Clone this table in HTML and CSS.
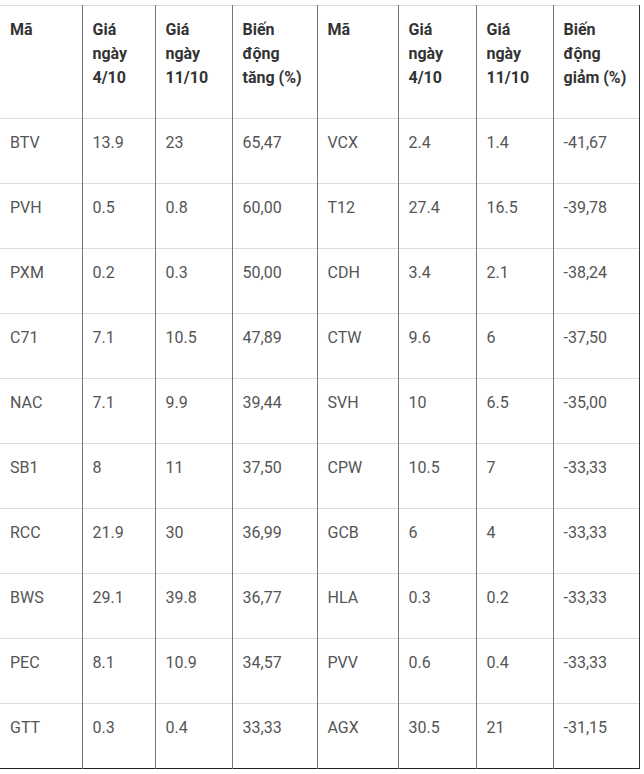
FILE: index.html
```html
<!DOCTYPE html>
<html>
<head>
<meta charset="utf-8">
<link rel="stylesheet" href="styles.css">
</head>
<body>
<table class="tbl">
<colgroup>
<col class="c1"><col class="c2"><col class="c3"><col class="c4"><col class="c5"><col class="c6"><col class="c7"><col class="c8">
</colgroup>
<thead>
<tr><th>Mã</th><th>Giá ngày 4/10</th><th>Giá ngày 11/10</th><th>Biến động tăng (%)</th><th>Mã</th><th>Giá ngày 4/10</th><th>Giá ngày 11/10</th><th>Biến động giảm (%)</th></tr>
</thead>
<tbody>
<tr><td>BTV</td><td>13.9</td><td>23</td><td>65,47</td><td>VCX</td><td>2.4</td><td>1.4</td><td>-41,67</td></tr>
<tr><td>PVH</td><td>0.5</td><td>0.8</td><td>60,00</td><td>T12</td><td>27.4</td><td>16.5</td><td>-39,78</td></tr>
<tr><td>PXM</td><td>0.2</td><td>0.3</td><td>50,00</td><td>CDH</td><td>3.4</td><td>2.1</td><td>-38,24</td></tr>
<tr><td>C71</td><td>7.1</td><td>10.5</td><td>47,89</td><td>CTW</td><td>9.6</td><td>6</td><td>-37,50</td></tr>
<tr><td>NAC</td><td>7.1</td><td>9.9</td><td>39,44</td><td>SVH</td><td>10</td><td>6.5</td><td>-35,00</td></tr>
<tr><td>SB1</td><td>8</td><td>11</td><td>37,50</td><td>CPW</td><td>10.5</td><td>7</td><td>-33,33</td></tr>
<tr><td>RCC</td><td>21.9</td><td>30</td><td>36,99</td><td>GCB</td><td>6</td><td>4</td><td>-33,33</td></tr>
<tr><td>BWS</td><td>29.1</td><td>39.8</td><td>36,77</td><td>HLA</td><td>0.3</td><td>0.2</td><td>-33,33</td></tr>
<tr><td>PEC</td><td>8.1</td><td>10.9</td><td>34,57</td><td>PVV</td><td>0.6</td><td>0.4</td><td>-33,33</td></tr>
<tr><td>GTT</td><td>0.3</td><td>0.4</td><td>33,33</td><td>AGX</td><td>30.5</td><td>21</td><td>-31,15</td></tr>
</tbody>
</table>
</body>
</html>
```
FILE: styles.css
```css
html, body {
  margin: 0;
  padding: 0;
  background: #fff;
}
body {
  padding-top: 5px;
  font-family: Roboto, "Liberation Sans", Arial, sans-serif;
}
.tbl {
  border-collapse: collapse;
  table-layout: fixed;
  width: 639px;
  border-top: 1px solid #dddddd;
  border-right: 1px solid #333;
  border-bottom: 1px solid #222;
}
.c1 { width: 82px; }
.c2 { width: 73px; }
.c3 { width: 77px; }
.c4 { width: 85px; }
.c5 { width: 81px; }
.c6 { width: 78px; }
.c7 { width: 77px; }
.c8 { width: 86px; }
.tbl th, .tbl td {
  text-align: left;
  vertical-align: top;
  font-size: 16px;
  line-height: 24px;
  padding: 12px 10px 28px 10px;
  border-right: 1px solid #777;
  border-top: 1px solid #dddddd;
  overflow: hidden;
  box-sizing: content-box;
}
.tbl th {
  font-weight: bold;
  color: #333;
  height: 72px;
}
.tbl td {
  color: #555;
  height: 24px;
}
.tbl th:last-child, .tbl td:last-child {
  border-right: 1px solid #333;
}
```
